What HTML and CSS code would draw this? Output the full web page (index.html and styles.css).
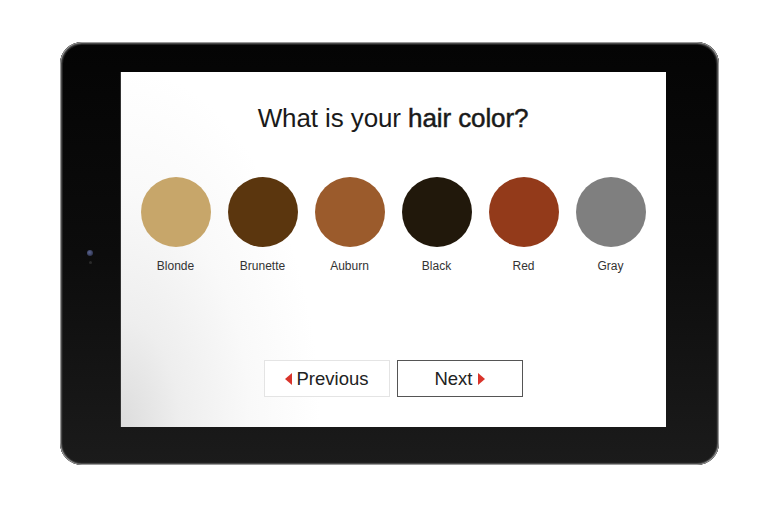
FILE: index.html
```html
<!DOCTYPE html>
<html>
<head>
<meta charset="utf-8">
<link rel="stylesheet" href="styles.css">
</head>
<body>
<div class="tablet">
  <span class="camera"></span>
  <span class="sensor"></span>
  <div class="screen">
    <h1 class="title">What is your <strong>hair color?</strong></h1>
    <div class="swatches">
      <div class="swatch"><span class="dot blonde"></span><span class="label">Blonde</span></div>
      <div class="swatch"><span class="dot brunette"></span><span class="label">Brunette</span></div>
      <div class="swatch"><span class="dot auburn"></span><span class="label">Auburn</span></div>
      <div class="swatch"><span class="dot black"></span><span class="label">Black</span></div>
      <div class="swatch"><span class="dot red"></span><span class="label">Red</span></div>
      <div class="swatch"><span class="dot gray"></span><span class="label">Gray</span></div>
    </div>
    <div class="nav">
      <button class="btn prev"><span class="tri-left"></span>Previous</button>
      <button class="btn next">Next<span class="tri-right"></span></button>
    </div>
  </div>
</div>
</body>
</html>
```

FILE: styles.css
```css
html, body {
  margin: 0;
  padding: 0;
  background: #ffffff;
}
body {
  width: 777px;
  height: 507px;
  overflow: hidden;
  font-family: "Liberation Sans", Arial, sans-serif;
}
.tablet {
  position: relative;
  box-sizing: border-box;
  margin: 42px 0 0 60px;
  width: 659px;
  height: 423px;
  padding: 30px 53px 38px 60px;
  border-radius: 22px;
  background: linear-gradient(180deg, #040404 0%, #0c0c0c 50%, #1b1b1b 100%);
  box-shadow: inset 0 0 0 1px #9a9a9a, inset 0 0 0 2px #4a4a4a, inset 0 0 0 3px #222;
}
.camera {
  position: absolute;
  left: 27px;
  top: 208px;
  width: 6px;
  height: 6px;
  border-radius: 50%;
  background: radial-gradient(circle at 40% 40%, #5a6490, #20243a);
}
.sensor {
  position: absolute;
  left: 29px;
  top: 219px;
  width: 3px;
  height: 3px;
  border-radius: 50%;
  background: #2a2a2a;
}
.screen {
  width: 546px;
  height: 355px;
  display: flex;
  flex-direction: column;
  align-items: center;
  background: radial-gradient(ellipse 200px 360px at 0% 100%, #dcdcdc 0%, #eeeeee 30%, #f9f9f9 65%, #ffffff 100%);
  box-shadow: inset 1px 0 0 #333;
}
.title {
  margin: 31px 0 0 0;
  font-size: 26px;
  font-weight: normal;
  color: #1a1a1a;
  letter-spacing: -0.1px;
  line-height: 31px;
}
.title strong {
  font-weight: normal;
  -webkit-text-stroke: 0.5px #1a1a1a;
}
.swatches {
  margin-top: 43px;
  display: flex;
  gap: 17px;
}
.swatch {
  width: 70px;
  display: flex;
  flex-direction: column;
  align-items: center;
}
.dot {
  width: 70px;
  height: 70px;
  border-radius: 50%;
}
.blonde { background: #c7a66a; }
.brunette { background: #5b360e; }
.auburn { background: #9b5b2c; }
.black { background: #21180b; }
.red { background: #933a1a; }
.gray { background: #7f7f7f; }
.label {
  margin-top: 12px;
  font-size: 12px;
  color: #333;
}
.nav {
  margin-top: 87px;
  display: flex;
  gap: 7px;
}
.btn {
  box-sizing: border-box;
  width: 126px;
  height: 37px;
  background: #fff;
  font-family: "Liberation Sans", Arial, sans-serif;
  font-size: 18.5px;
  color: #222;
  display: flex;
  align-items: center;
  justify-content: center;
  gap: 5px;
  padding: 0;
}
.prev {
  border: 1px solid #e4e4e4;
}
.next {
  border: 1px solid #555;
}
.tri-left {
  width: 0;
  height: 0;
  border-top: 6px solid transparent;
  border-bottom: 6px solid transparent;
  border-right: 7px solid #d9342b;
}
.tri-right {
  width: 0;
  height: 0;
  border-top: 6px solid transparent;
  border-bottom: 6px solid transparent;
  border-left: 7px solid #d9342b;
}
```
